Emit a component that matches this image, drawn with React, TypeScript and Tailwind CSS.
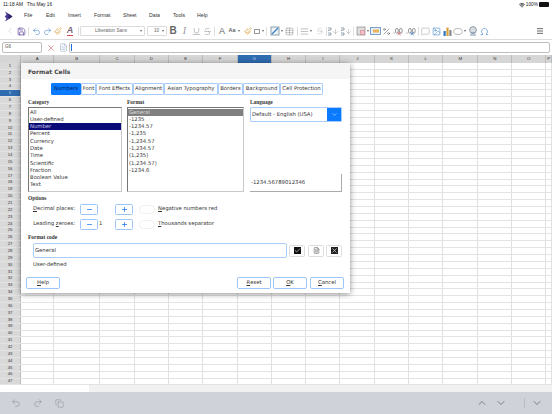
import React from "react";
import { ChevronLeft, Undo2, Redo2, Paintbrush, Underline, Strikethrough, AlignJustify, Percent, MessageSquare, Image, Omega, Menu, Wifi, X, Check, Minus, Plus, ChevronDown, ChevronUp, Copy, Table, FileText, Save, ArrowDown } from "lucide-react";

const cols = ["A","B","C","D","E","F","G","H","I","J","K","L","M","N","O","P"];
const colW = [33.3,46,34.4,34.3,34.3,34.4,34.3,34.3,34,35,34,34,35,34,34,6];
const rows = Array.from({ length: 47 }, (_, i) => i + 1);
const cats = ["All","User-defined","Number","Percent","Currency","Date","Time","Scientific","Fraction","Boolean Value","Text"];
const fmts = ["General","-1235","-1234.57","-1,235","-1,234.57","-1,234.57","(1,235)","(1,234.57)","-1234.6"];

function Slot({ className = "", children }: { className?: string; children?: React.ReactNode }) {
  return <div className={"w-[11px] h-[11px] flex items-center justify-center shrink-0 " + className}>{children}</div>;
}
function Caret({ className = "" }: { className?: string }) {
  return <div className={"w-0 h-0 border-l-[1.5px] border-r-[1.5px] border-t-[2px] border-l-transparent border-r-transparent border-t-[#666] shrink-0 " + className} />;
}
function Sep({ className = "" }: { className?: string }) {
  return <div className={"w-px h-[9px] bg-[#dedede] shrink-0 " + className} />;
}
function Sort() {
  return (
    <div className="flex items-center">
      <svg width="5" height="9" viewBox="0 0 5 9">
        <path d="M1 1h3M4 1v2H1.5M1.5 3v1M1 6h3v2H1" fill="none" stroke="#7d8a96" strokeWidth="0.8" />
      </svg>
      <ArrowDown size={7} strokeWidth={1.2} color="#777" />
    </div>
  );
}
function Dec({ color }: { color: string }) {
  return (
    <svg width="13" height="10" viewBox="0 0 13 10">
      <circle cx="1.2" cy="7.5" r="0.6" fill="#666" />
      <ellipse cx="4.6" cy="4.8" rx="1.7" ry="3" fill="none" stroke="#666" strokeWidth="0.8" />
      <ellipse cx="9.2" cy="4.8" rx="1.7" ry="3" fill="none" stroke="#666" strokeWidth="0.8" />
      <path d="M5.5 6.5 L9 9.8 M9 6.5 L5.5 9.8" stroke={color} strokeWidth="1" />
    </svg>
  );
}
function Tab({ label, className = "", active = false }: { label: string; className?: string; active?: boolean }) {
  return (
    <div className={"h-full flex items-center justify-center shrink-0 rounded-[1px] border " + (active ? "bg-[#0a7aff] border-[#0a7aff] text-[#00215a] " : "bg-white border-[#a9cdfb] text-[#333] ") + className}>{label}</div>
  );
}
function StepBtn({ minus, className = "" }: { minus?: boolean; className?: string }) {
  return (
    <div className={"w-[18px] h-[11px] rounded-[1.5px] border border-[#9cc6fa] bg-white flex items-center justify-center shrink-0 " + className}>
      {minus ? <Minus size={7} strokeWidth={2.4} color="#0a6cf0" /> : <Plus size={7} strokeWidth={2.4} color="#0a6cf0" />}
    </div>
  );
}
function Toggle({ className = "" }: { className?: string }) {
  return <div className={"w-[16px] h-[9px] rounded-full border border-[#f0f0f0] bg-white shrink-0 " + className} />;
}
function Btn({ label, className = "" }: { label: string; className?: string }) {
  return (
    <div className={"w-[34px] h-[12px] rounded-[2px] border border-[#9cc6fa] bg-white flex items-center justify-center text-[#333] shrink-0 " + className}>
      <span className="underline">{label[0]}</span>{label.slice(1)}
    </div>
  );
}
function Mini({ children, className = "" }: { children?: React.ReactNode; className?: string }) {
  return <div className={"w-[16px] h-[12px] rounded-[1.5px] border border-[#ddd] bg-white flex items-center justify-center shrink-0 " + className}>{children}</div>;
}
function Label({ children, className = "" }: { children: React.ReactNode; className?: string }) {
  return <div className={"font-['Liberation_Serif',serif] font-bold text-[5.4px] leading-[7px] text-[#333] " + className}>{children}</div>;
}

export default function App() {
  return (
    <div className="relative w-[552px] h-[414px] overflow-hidden bg-white font-['Liberation_Sans',sans-serif] flex flex-col">
      {/* status bar */}
      <div className="h-[9px] flex items-center justify-between pl-[3px] pr-[3px] text-[4.8px] text-[#222] shrink-0">
        <span className="whitespace-pre">11:18 AM   Thu May 16</span>
        <div className="flex items-center gap-[1px]">
          <Wifi size={6} strokeWidth={3} color="#222" />
          <span>100%</span>
          <div className="w-[10px] h-[4.5px] rounded-[1px] bg-[#111]" />
        </div>
      </div>
      {/* menu bar */}
      <div className="h-[14px] flex items-center text-[5.2px] text-[#333] shrink-0">
        <svg width="9" height="11" viewBox="0 0 9 11" className="ml-[4px]">
          <path d="M1 0.5 L5 3 L8.5 5.5 L5 8 L1 10.5 L2.5 7.5 L0.8 5.5 L2.5 3.5 Z" fill="#4a3a92" />
          <path d="M5 3 L8.5 5.5 L5 8 L4 5.5 Z" fill="#2e2569" />
        </svg>
        <span className="ml-[11px] w-[22px]">File</span>
        <span className="w-[22px]">Edit</span>
        <span className="w-[26px]">Insert</span>
        <span className="w-[29px]">Format</span>
        <span className="w-[26px]">Sheet</span>
        <span className="w-[24px]">Data</span>
        <span className="w-[24px]">Tools</span>
        <span>Help</span>
      </div>
      {/* toolbar */}
      <div className="h-[17px] flex items-center pl-[4.5px] border-b border-[#dcdcdc] shrink-0">
        <Slot><ChevronLeft size={10} strokeWidth={1} color="#b5b5b5" /></Slot>
        <Slot><Save size={9} strokeWidth={1.8} color="#5a3f99" /></Slot>
        <Sep className="mx-[1.5px]" />
        <Slot><Undo2 size={9} strokeWidth={1.3} color="#2a76c6" /></Slot>
        <Slot><Redo2 size={9} strokeWidth={1.3} color="#2a76c6" /></Slot>
        <Slot><Paintbrush size={8} strokeWidth={1.6} color="#d8a03a" /></Slot>
        <Slot className="ml-[1px]"><span className="text-[9px] italic font-bold text-[#7a6a78] leading-none border-b border-[#d04a4a]">A</span></Slot>
        <Sep className="ml-[2px] mr-[1.5px]" />
        <div className="w-[65px] h-[10px] border border-[#dcdcdc] rounded-[1px] flex items-center justify-between pl-[14px] pr-[2px] text-[4.6px] text-[#666] shrink-0">
          <span>Liberation Sans</span><Caret />
        </div>
        <div className="ml-[2px] w-[20px] h-[10px] border border-[#dcdcdc] rounded-[1px] flex items-center justify-between pl-[6px] pr-[2px] text-[4.6px] text-[#666] shrink-0">
          <span>10</span><Caret />
        </div>
        <Slot className="ml-[0.5px]"><span className="text-[10px] font-bold text-[#666] leading-none">B</span></Slot>
        <Slot className="ml-[0.5px]"><span className="text-[10px] font-['Liberation_Serif',serif] italic text-[#999] leading-none">I</span></Slot>
        <Slot className="ml-[0.5px]"><Underline size={9} strokeWidth={1.2} color="#777" /></Slot>
        <Slot><Strikethrough size={9} strokeWidth={1.2} color="#888" /></Slot>
        <Sep className="ml-[1.5px] mr-[1.5px]" />
        <Slot><span className="text-[9px] text-[#666] leading-none">A</span></Slot>
        <Slot className="-ml-[1px]"><span className="text-[5.5px] font-bold text-[#666] leading-none">Aa</span></Slot>
        <Caret className="ml-[0.5px]" />
        <Slot className="ml-[2px]"><Paintbrush size={8} strokeWidth={1.6} color="#d8a03a" /></Slot>
        <Slot className="-ml-[2px]"><div className="w-[6px] h-[5px] border border-[#999]" /></Slot>
        <Caret />
        <Sep className="ml-[2px] mr-[2px]" />
        <Slot>
          <svg width="10" height="10" viewBox="0 0 10 10">
            <rect x="1" y="1" width="8" height="8" fill="#eef3f6" stroke="#6f8c9a" strokeWidth="0.8" />
            <path d="M2 8 L8 2" stroke="#3d7fc4" strokeWidth="1.2" />
          </svg>
        </Slot>
        <Caret className="ml-[0.5px]" />
        <Slot className="ml-[1.5px]"><Table size={9} strokeWidth={1.3} color="#888" /></Slot>
        <Sep className="ml-[1.5px] mr-[1.5px]" />
        <Slot><AlignJustify size={9} strokeWidth={1.6} color="#999" /></Slot>
        <Caret />
        <Slot className="ml-[2px]"><Strikethrough size={8} strokeWidth={1.1} color="#9ab" /></Slot>
        <Sep className="mx-[0.5px]" />
        <Slot><Sort /></Slot>
        <Slot className="ml-[2px]"><Sort /></Slot>
        <Sep className="mx-[1.5px]" />
        <Slot>
          <svg width="10" height="10" viewBox="0 0 10 10">
            <rect x="1" y="1" width="8" height="8" fill="#dedede" stroke="#8a8a8a" strokeWidth="0.7" />
            <rect x="4.5" y="4.5" width="4" height="4" fill="#efc0c8" stroke="#cf7a88" strokeWidth="0.5" />
          </svg>
        </Slot>
        <Caret className="ml-[0.5px]" />
        <Slot className="ml-[1px]">
          <svg width="11" height="8" viewBox="0 0 11 8">
            <rect x="0.5" y="0.5" width="10" height="7" fill="#e8eef5" stroke="#5a8bbf" strokeWidth="0.8" />
            <rect x="3" y="2.5" width="6" height="3" fill="#e9b45a" />
          </svg>
        </Slot>
        <Slot className="ml-[0.5px]"><Percent size={9} strokeWidth={1.4} color="#555" /></Slot>
        <Slot className="ml-[0.5px]"><Dec color="#d85a5a" /></Slot>
        <Slot className="ml-[2.5px]"><Dec color="#2a76c6" /></Slot>
        <Sep className="ml-[1px] mr-[0.5px]" />
        <Slot><MessageSquare size={9} strokeWidth={1.1} color="#888" /></Slot>
        <Slot><Image size={9} strokeWidth={1.4} color="#2a76c6" /></Slot>
        <Slot>
          <svg width="9" height="9" viewBox="0 0 9 9">
            <rect x="0.5" y="4" width="2.2" height="5" fill="#2a76c6" />
            <rect x="3.4" y="0.5" width="2.2" height="8.5" fill="#d9a03a" />
            <rect x="6.3" y="3" width="2.2" height="6" fill="#8a8a8a" />
          </svg>
        </Slot>
        <Slot>
          <svg width="10" height="7" viewBox="0 0 10 7">
            <ellipse cx="5" cy="3.5" rx="4.3" ry="3" fill="none" stroke="#999" strokeWidth="0.7" />
          </svg>
        </Slot>
        <Caret />
        <Slot className="ml-[2px]">
          <svg width="10" height="10" viewBox="0 0 10 10">
            <circle cx="5" cy="4" r="3.4" fill="#d8dde2" stroke="#7f8a94" strokeWidth="0.8" />
            <path d="M2 9 L8 9 M3 7 L7 7" stroke="#6f8aa4" strokeWidth="0.9" />
          </svg>
        </Slot>
        <Slot><Omega size={9} strokeWidth={1.5} color="#2a76c6" /></Slot>
        <Slot className="ml-[45px]"><Menu size={8} strokeWidth={2.2} color="#333" /></Slot>
      </div>
      {/* formula bar */}
      <div className="h-[15px] flex items-center pl-[2px] pr-[2px] shrink-0">
        <div className="w-[40px] h-[11px] border border-[#bdbdbd] rounded-[2px] flex items-center pl-[2px] text-[4.6px] text-[#555]">G6</div>
        <X size={10} strokeWidth={1.1} color="#d23a3a" className="ml-[4px]" />
        <FileText size={9} strokeWidth={1.2} color="#7a96b5" className="ml-[3px]" />
        <div className="ml-[1px] flex-1 h-[11px] border border-[#bdbdbd] rounded-[2px] flex items-center pl-[1px]">
          <div className="w-[0.6px] h-[7px] bg-[#1a6fe0]" />
        </div>
      </div>
      {/* column headers */}
      <div className="h-[8px] flex bg-[#d6d6d6] shrink-0">
        <div className="w-[21px] shrink-0 border-r border-[#bbb]" />
        {cols.map((c, i) => (
          <div key={c} style={{ width: colW[i] }} className={"shrink-0 flex items-center justify-center text-[4.4px] border-r border-[#bbb] " + (c === "G" ? "bg-[#2f6cb0] text-[#b8cfe8]" : "text-[#333]")}>{c}</div>
        ))}
      </div>
      {/* grid rows */}
      <div className="flex flex-col shrink-0">
        {rows.map((r) => (
          <div key={r} className="h-[6.86px] flex border-b border-[#e3e3e3] box-border">
            <div className={"w-[21px] shrink-0 flex items-center justify-center text-[4.2px] border-r border-[#bbb] " + (r === 5 ? "bg-[#2f6cb0] text-[#b8cfe8]" : "bg-[#d9d9d9] text-[#333]")}>{r}</div>
            {cols.map((c, i) => (
              <div key={c} style={{ width: colW[i] }} className="shrink-0 border-r border-[#e0e0e0]" />
            ))}
          </div>
        ))}
      </div>
      <div className="flex-1 flex flex-col">
        <div className="h-[7px] bg-[#f1f1f1] flex">
          <div className="w-[89px] bg-white" />
        </div>
        {/* bottom bar */}
        <div className="flex-1 bg-[#cfd2d9] flex items-center pl-[11px] pr-[9px]">
          <Undo2 size={10} strokeWidth={1} color="#777" />
          <Redo2 size={10} strokeWidth={1} color="#777" className="ml-[12px]" />
          <Copy size={9} strokeWidth={1} color="#777" className="ml-[12px]" />
          <ChevronUp size={12} strokeWidth={1.2} color="#444" className="ml-auto" />
          <ChevronDown size={12} strokeWidth={1.2} color="#444" className="ml-[7px]" />
          <div className="w-px h-[10px] bg-[#b9bcc3] ml-[17px]" />
          <ChevronDown size={12} strokeWidth={1.2} color="#444" className="ml-[6px]" />
        </div>
      </div>

      {/* dialog */}
      <div className="absolute left-[21px] top-[63px] w-[329px] h-[230px] bg-white shadow-[0_1px_6px_rgba(0,0,0,0.45)] flex flex-col font-['DejaVu_Sans',sans-serif] text-[5.3px] text-[#333]">
        <div className="h-[16px] bg-[#f5f5f5] flex items-center pl-[7px] text-[6px] font-bold text-[#444] shrink-0">Format Cells</div>
        <div className="h-[12px] mt-[4px] ml-[30px] flex shrink-0">
          <Tab active label="Numbers" className="w-[30px]" />
          <Tab label="Font" className="w-[15px]" />
          <Tab label="Font Effects" className="w-[37px]" />
          <Tab label="Alignment" className="w-[31px]" />
          <Tab label="Asian Typography" className="w-[54px]" />
          <Tab label="Borders" className="w-[25px]" />
          <Tab label="Background" className="w-[37px]" />
          <Tab label="Cell Protection" className="w-[43px]" />
        </div>
        <div className="flex mt-[4px] pl-[7px] shrink-0">
          <div className="w-[94px]">
            <Label>Category</Label>
            <div className="h-[85px] mt-[1px] border border-[#c8c8c8] border-l-[#777] border-t-[#777] py-[0.5px] flex flex-col">
              {cats.map((c) => (
                <div key={c} className={"h-[7.3px] leading-[7.3px] pl-[1px] " + (c === "Number" ? "bg-[#0a0a78] text-[#c8c8e8]" : "")}>{c}</div>
              ))}
            </div>
          </div>
          <div className="w-[117px] ml-[5px]">
            <Label>Format</Label>
            <div className="h-[85px] mt-[1px] border border-[#c8c8c8] border-l-[#777] border-t-[#777] py-[0.5px] flex flex-col">
              {fmts.map((c) => (
                <div key={c} className={"h-[7.3px] leading-[7.3px] pl-[1px] " + (c === "General" ? "bg-[#808080] text-[#dddddd]" : "")}>{c}</div>
              ))}
            </div>
          </div>
          <div className="w-[92px] ml-[6px] flex flex-col">
            <Label>Language</Label>
            <div className="h-[15px] mt-[1px] flex border border-[#a9cdfb] rounded-[1px] shrink-0">
              <div className="flex-1 flex items-center pl-[1px]">Default - English (USA)</div>
              <div className="w-[14px] bg-[#0a7aff] flex items-center justify-center">
                <ChevronDown size={7} strokeWidth={1.6} color="#ffffff" />
              </div>
            </div>
            <div className="mt-auto h-[18px] border-r border-b border-[#aaa] flex items-center pl-[1px]">-1234.56789012346</div>
          </div>
        </div>
        <Label className="ml-[7px] mt-[2.5px]">Options</Label>
        <div className="flex items-center h-[11px] mt-[2px] shrink-0">
          <div className="w-[54px] text-right shrink-0"><span className="underline">D</span>ecimal places:</div>
          <StepBtn minus className="ml-[5px]" />
          <StepBtn className="ml-[17px]" />
          <Toggle className="ml-[6px]" />
          <span className="ml-[3px]"><span className="underline">N</span>egative numbers red</span>
        </div>
        <div className="flex items-center h-[11px] mt-[4px] shrink-0">
          <div className="w-[54px] text-right shrink-0">Leading <span className="underline">z</span>eroes:</div>
          <StepBtn minus className="ml-[5px]" />
          <span className="w-[17px] pl-[1px] shrink-0">1</span>
          <StepBtn />
          <Toggle className="ml-[6px]" />
          <span className="ml-[3px]"><span className="underline">T</span>housands separator</span>
        </div>
        <Label className="ml-[7px] mt-[4px]">Format code</Label>
        <div className="flex items-center mt-[2.5px] ml-[12px] shrink-0">
          <div className="w-[254px] h-[15px] border border-[#a9cdfb] rounded-[2px] flex items-center pl-[1px]">General</div>
          <Mini className="ml-[2px]"><Check size={7} strokeWidth={2} color="#fff" className="bg-[#111]" /></Mini>
          <Mini className="ml-[3px]"><FileText size={7} strokeWidth={1.5} color="#333" /></Mini>
          <Mini className="ml-[2px]"><X size={7} strokeWidth={2} color="#fff" className="bg-[#222]" /></Mini>
        </div>
        <div className="ml-[12px] mt-[3px] h-[7px] leading-[7px] shrink-0">User-defined</div>
        <div className="flex mt-[9px] pl-[5px] shrink-0">
          <Btn label="Help" />
          <Btn label="Reset" className="ml-[177px]" />
          <Btn label="OK" className="ml-[2px]" />
          <Btn label="Cancel" className="ml-[3px]" />
        </div>
      </div>
    </div>
  );
}
